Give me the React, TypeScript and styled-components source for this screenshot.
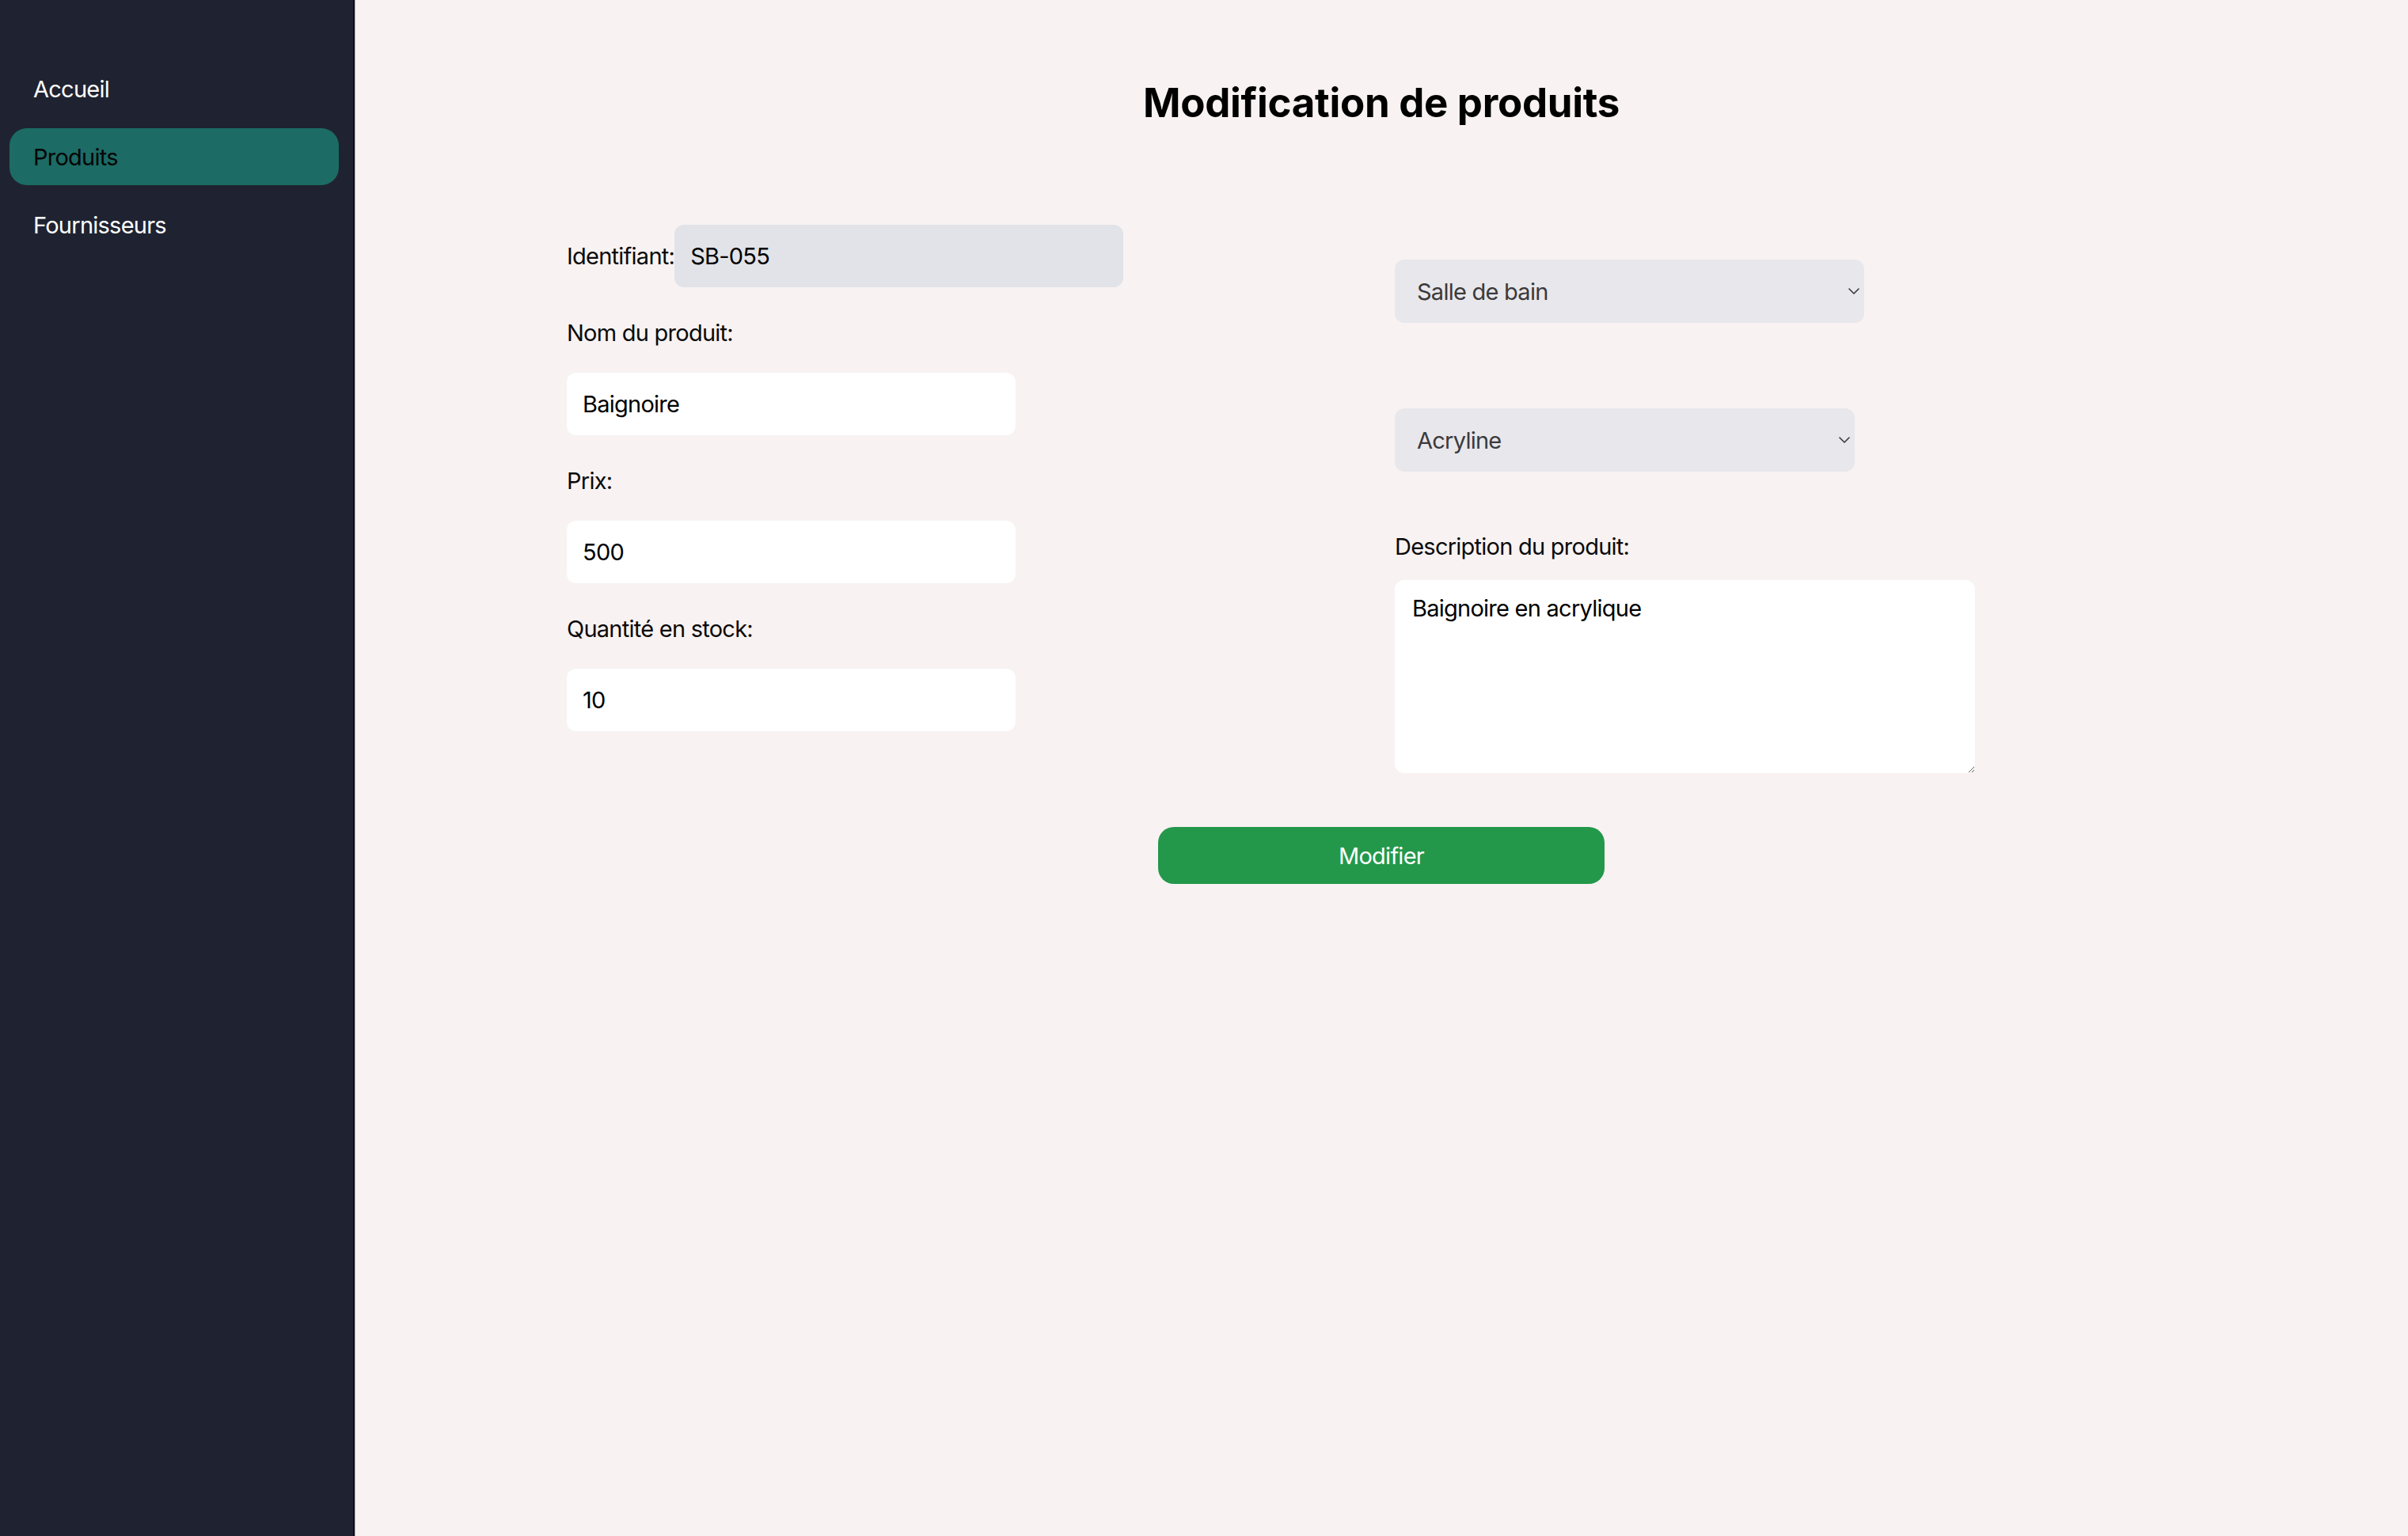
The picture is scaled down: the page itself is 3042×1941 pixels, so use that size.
import React from "react";
import styled, { createGlobalStyle } from "styled-components";

const GlobalStyle = createGlobalStyle`
  html, body {
    margin: 0;
    padding: 0;
  }
  body {
    font-family: Inter, "Liberation Sans", Arial, sans-serif;
    color: #0a0a0a;
  }
  * { box-sizing: border-box; }
`;

const Layout = styled.div`
  display: flex;
  min-height: 100vh;
  background: #f8f2f2;
`;

const Sidebar = styled.aside`
  width: 448px;
  flex-shrink: 0;
  background: #1f2331;
  border-right: 2px solid #0c0f18;
  box-shadow: 1px 0 0 #b7b3b8;
  padding: 76px 18px 0 12px;
  display: flex;
  flex-direction: column;
  gap: 14px;
`;

const NavItem = styled.a<{ $active?: boolean }>`
  display: flex;
  align-items: center;
  height: 72px;
  padding: 0 30px;
  border-radius: 22px;
  font-size: 29px;
  letter-spacing: -0.75px;
  text-decoration: none;
  color: ${(p) => (p.$active ? "#050505" : "#ffffff")};
  background: ${(p) => (p.$active ? "#1c6b64" : "transparent")};
`;

const Main = styled.main`
  flex: 1;
  padding-top: 98px;
  display: flex;
  flex-direction: column;
  align-items: center;
`;

const Title = styled.h1`
  margin: 0;
  font-size: 51px;
  line-height: 64px;
  font-weight: 700;
  letter-spacing: -0.3px;
  color: #000;
  text-align: center;
`;

const Form = styled.form`
  margin-top: 122px;
  display: flex;
  flex-direction: column;
  align-items: center;
`;

const Columns = styled.div`
  display: grid;
  grid-template-columns: 1012px 1012px;
  column-gap: 34px;
  align-items: start;
`;

const Column = styled.div<{ $offset?: number }>`
  display: flex;
  flex-direction: column;
  align-items: flex-start;
  padding-top: ${(p) => p.$offset ?? 0}px;
`;

const InlineRow = styled.div`
  display: flex;
  align-items: center;
`;

const Label = styled.label`
  display: block;
  font-size: 29px;
  line-height: 48px;
  letter-spacing: -0.75px;
  color: #0a0a0a;
`;

const FieldLabel = styled(Label)<{ $top: number; $bottom: number }>`
  margin-top: ${(p) => p.$top}px;
  margin-bottom: ${(p) => p.$bottom}px;
`;

const TextInput = styled.input<{ $muted?: boolean }>`
  width: 567px;
  height: 79px;
  padding: 0 20px;
  border: none;
  outline: none;
  border-radius: 12px;
  font-family: inherit;
  font-size: 29px;
  letter-spacing: -0.75px;
  color: #000;
  background: ${(p) => (p.$muted ? "#e2e3e8" : "#ffffff")};
`;

const SelectWrap = styled.div<{ $width: number; $gap: number }>`
  position: relative;
  width: ${(p) => p.$width}px;
  height: 80px;
  margin-bottom: ${(p) => p.$gap}px;
`;

const Select = styled.select`
  appearance: none;
  -webkit-appearance: none;
  width: 100%;
  height: 100%;
  padding: 0 40px 0 28px;
  border: none;
  outline: none;
  border-radius: 12px;
  background: #e8e7eb;
  font-family: inherit;
  font-size: 29px;
  letter-spacing: -0.75px;
  color: #3a3a3c;
`;

const Chevron = styled.svg`
  position: absolute;
  right: 6px;
  top: 50%;
  width: 14px;
  height: 9px;
  transform: translateY(-50%);
  pointer-events: none;
`;

const TextArea = styled.textarea`
  width: 733px;
  height: 244px;
  padding: 12px 22px;
  border: none;
  outline: none;
  border-radius: 12px;
  background: #ffffff;
  font-family: inherit;
  font-size: 29px;
  line-height: 48px;
  letter-spacing: -0.75px;
  color: #000;
  resize: both;
`;

const SubmitButton = styled.button`
  margin-top: 68px;
  width: 564px;
  height: 72px;
  border: none;
  border-radius: 20px;
  background: #23984a;
  color: #ffffff;
  font-family: inherit;
  font-size: 29px;
  letter-spacing: -0.75px;
  cursor: pointer;
`;

const ChevronIcon = () => (
  <Chevron viewBox="0 0 14 9" fill="none">
    <polyline points="1,1.5 7,7.5 13,1.5" stroke="#3a3a3c" strokeWidth="1.6" strokeLinecap="round" strokeLinejoin="round" />
  </Chevron>
);

export default function App() {
  return (
    <>
      <GlobalStyle />
      <Layout>
        <Sidebar>
          <NavItem href="#">Accueil</NavItem>
          <NavItem href="#" $active>
            Produits
          </NavItem>
          <NavItem href="#">Fournisseurs</NavItem>
        </Sidebar>
        <Main>
          <Title>Modification de produits</Title>
          <Form onSubmit={(e) => e.preventDefault()}>
            <Columns>
              <Column>
                <InlineRow>
                  <Label htmlFor="id">Identifiant:</Label>
                  <TextInput id="id" $muted readOnly value="SB-055" />
                </InlineRow>
                <FieldLabel htmlFor="nom" $top={34} $bottom={26}>
                  Nom du produit:
                </FieldLabel>
                <TextInput id="nom" defaultValue="Baignoire" />
                <FieldLabel htmlFor="prix" $top={34} $bottom={26}>
                  Prix:
                </FieldLabel>
                <TextInput id="prix" defaultValue="500" />
                <FieldLabel htmlFor="qte" $top={34} $bottom={26}>
                  Quantité en stock:
                </FieldLabel>
                <TextInput id="qte" defaultValue="10" />
              </Column>
              <Column $offset={44}>
                <SelectWrap $width={593} $gap={108}>
                  <Select defaultValue="sdb">
                    <option value="sdb">Salle de bain</option>
                    <option value="cuisine">Cuisine</option>
                  </Select>
                  <ChevronIcon />
                </SelectWrap>
                <SelectWrap $width={581} $gap={0}>
                  <Select defaultValue="acryline">
                    <option value="acryline">Acryline</option>
                  </Select>
                  <ChevronIcon />
                </SelectWrap>
                <FieldLabel htmlFor="desc" $top={71} $bottom={18}>
                  Description du produit:
                </FieldLabel>
                <TextArea id="desc" defaultValue="Baignoire en acrylique" />
              </Column>
            </Columns>
            <SubmitButton type="submit">Modifier</SubmitButton>
          </Form>
        </Main>
      </Layout>
    </>
  );
}
